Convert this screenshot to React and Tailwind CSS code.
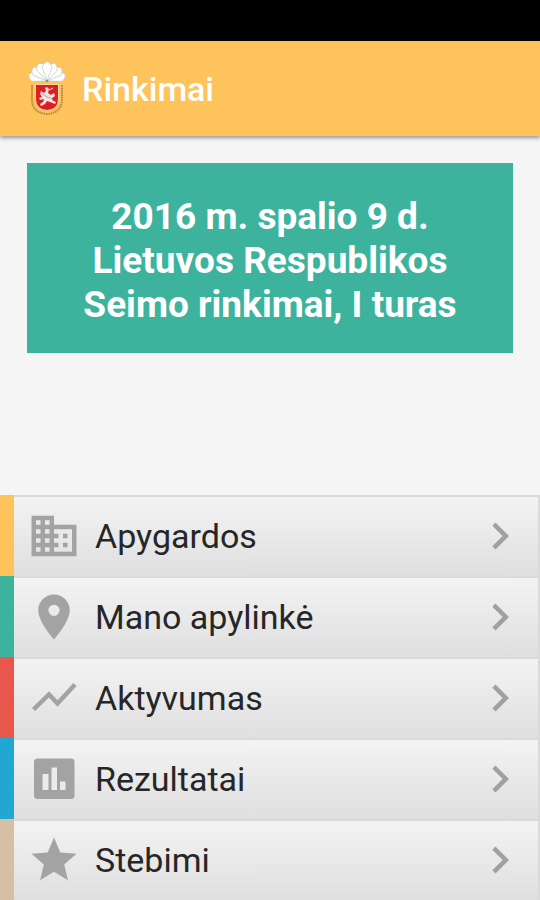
import React from 'react';
import { MdBusiness, MdChevronRight, MdLocationOn, MdStar } from 'react-icons/md';

const TrendIcon = ({ className }) => (
  <svg viewBox="0 0 54 54" className={className} aria-hidden="true">
    <path d="M6.500 38.500 L22 23.500 L30.500 32.500 L48 13.500" fill="none" stroke="currentColor" strokeWidth="4.5" />
  </svg>
);

const ResultsIcon = ({ className }) => (
  <svg viewBox="0 0 54 54" className={className} aria-hidden="true">
    <rect x="7" y="6.5" width="40.5" height="40.5" rx="3.5" fill="currentColor" />
    <path d="M15.500 22h6v16h-6z M24.500 15.500h5.500v22.500h-5.500z M33 29.500h5.500v8.500h-5.500z" fill="#ebebeb" />
  </svg>
);

const MENU_ITEMS = [
  { id: 'apygardos', label: 'Apygardos', icon: MdBusiness, stripe: 'bg-[#ffc35b]' },
  { id: 'apylinke', label: 'Mano apylinkė', icon: MdLocationOn, stripe: 'bg-[#3db39e]' },
  { id: 'aktyvumas', label: 'Aktyvumas', icon: TrendIcon, stripe: 'bg-[#e9574c]' },
  { id: 'rezultatai', label: 'Rezultatai', icon: ResultsIcon, stripe: 'bg-[#22a7d3]' },
  { id: 'stebimi', label: 'Stebimi', icon: MdStar, stripe: 'bg-[#d5bfa5]' },
];

// Angles of the ballot papers fanned out above the shield
const FAN = [-72, 72, -48, 48, -24, 24, 0];

const Emblem = () => (
  <svg viewBox="0 0 38 56" className="h-14 w-[38px] shrink-0" aria-hidden="true">
    {FAN.map((angle) => (
      <path
        key={angle}
        d="M19 20 L14 6 Q15 2 19 0.5 Q23 2 24 6 Z"
        transform={`rotate(${angle} 19 20)`}
        fill="#fdfdfb"
        stroke="#b5c0c4"
        strokeWidth="0.6"
      />
    ))}
    <circle cx="19" cy="20" r="1.2" fill="#8f8b7c" />
    {/* Lettering ring round the shield */}
    <path
      d="M4 24 V38 Q4 52 19 53 Q34 52 34 38 V24"
      fill="none"
      stroke="#76632f"
      strokeWidth="2"
      strokeDasharray="1.5 0.8"
      opacity="0.6"
    />
    <path
      d="M7.500 23.500 H30.500 V38 Q30.500 48.500 19 49.500 Q7.500 48.500 7.500 38 Z"
      fill="#dd1f20"
      stroke="#f3d9a4"
      strokeWidth="1"
    />
    {/* Rider and horse */}
    <path
      d="M17 27 L19 26 L21 28 L20 32 L23 34 L26 32 L27 35 L24 37 L24 39 L28 41 L27 43 L22 41 L19 40 L17 43 L13 45 L12 43 L15 41 L16 38 L12 39 L11 37 L14 36 L12 33 L13 30 L16 32 L18 30 Z"
      fill="#f6e4e4"
    />
    <path d="M13 32 L19 36 M19 36 L25 38" stroke="#b9a5a8" strokeWidth="1" />
    <path d="M21 29 L25 27" stroke="#f6eeee" strokeWidth="1" />
  </svg>
);

const MenuRow = ({ item }) => {
  const Icon = item.icon;
  return (
    <li className="flex h-[81px]">
      <span className={`w-3.5 shrink-0 ${item.stripe}`} />
      <button
        type="button"
        className="flex flex-1 items-center border-t-2 border-r-2 border-[#dadada] bg-linear-to-b from-[#f3f3f3] to-[#dfdfdf] pr-[11px] pb-0.5 pl-[13px] text-left"
      >
        <Icon className="size-[54px] shrink-0 text-[#a3a3a3]" />
        <span className="ml-3.5 flex-1 text-[34px] leading-10 text-[#262626]">{item.label}</span>
        <MdChevronRight className="size-[54px] shrink-0 text-[#a0a0a0]" />
      </button>
    </li>
  );
};

const App = () => (
  <div className="flex min-h-screen flex-col bg-[#f5f5f5] font-['Roboto',sans-serif]">
    {/* System status bar */}
    <div className="h-[41px] shrink-0 bg-black" />

    <header className="flex h-[95px] shrink-0 items-center gap-4 bg-[#ffc35b] px-7 shadow-[0_2px_4px_rgba(0,0,0,0.4)]">
      <Emblem />
      <h1 className="text-[34px] leading-10 font-medium text-white">Rinkimai</h1>
    </header>

    <main className="flex flex-1 flex-col justify-between">
      <section className="mx-[27px] mt-[27px] mb-8 bg-[#3db39e] px-10 pt-8 pb-[26px]">
        <h2 className="text-center text-[37px] leading-11 font-bold text-white">
          2016 m. spalio 9 d. Lietuvos Respublikos Seimo rinkimai, I turas
        </h2>
      </section>

      <nav>
        <ul>
          {MENU_ITEMS.map((item) => <MenuRow key={item.id} item={item} />)}
        </ul>
      </nav>
    </main>
  </div>
);

export default App;
